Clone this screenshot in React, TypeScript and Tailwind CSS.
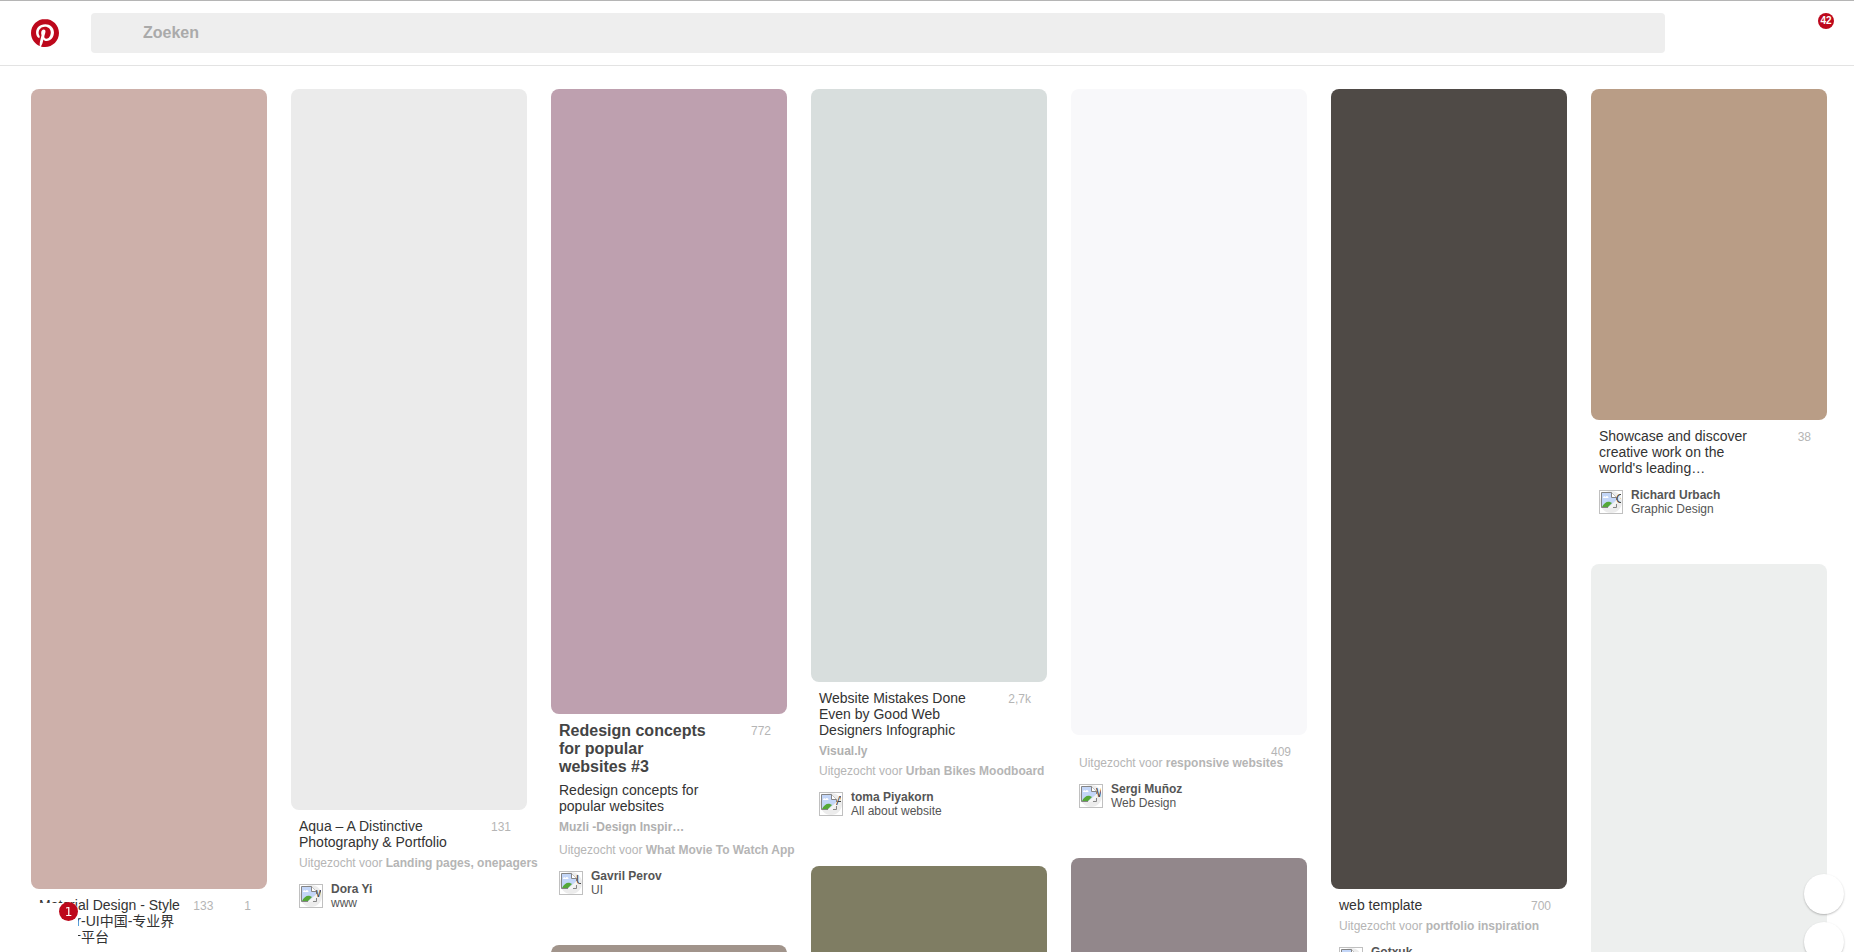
import React from 'react';

type Pin = {
  color: string;
  height: string;
  heading?: string;
  title?: string;
  count?: string;
  likes?: string;
  source?: string;
  sourceClass?: string;
  via?: string;
  author?: string;
  board?: string;
  glyph?: string;
};

const columns: Pin[][] = [
  [
    { color: 'bg-[#cdb0aa]', height: 'h-[800px]', title: 'Material Design - Style Guider-UI中国-专业界面设计平台', count: '133', likes: '1' },
  ],
  [
    { color: 'bg-[#ebebeb]', height: 'h-[721px]', title: 'Aqua – A Distinctive Photography & Portfolio', count: '131', via: 'Landing pages, onepagers', author: 'Dora Yi', board: 'www', glyph: 'w' },
  ],
  [
    { color: 'bg-[#bea0af]', height: 'h-[625px]', heading: 'Redesign concepts for popular websites #3', title: 'Redesign concepts for popular websites', count: '772', source: 'Muzli -Design Inspir…', sourceClass: 'pb-[3px]', via: 'What Movie To Watch App', author: 'Gavril Perov', board: 'UI', glyph: 'U' },
    { color: 'bg-[#a1948b]', height: 'h-[400px]' },
  ],
  [
    { color: 'bg-[#d8dedd]', height: 'h-[593px]', title: 'Website Mistakes Done Even by Good Web Designers Infographic', count: '2,7k', source: 'Visual.ly', via: 'Urban Bikes Moodboard', author: 'toma Piyakorn', board: 'All about website', glyph: 'A' },
    { color: 'bg-[#7f7d63]', height: 'h-[400px]' },
  ],
  [
    { color: 'bg-[#f8f8fa]', height: 'h-[646px]', count: '409', via: 'responsive websites', author: 'Sergi Muñoz', board: 'Web Design', glyph: 'W' },
    { color: 'bg-[#92878b]', height: 'h-[400px]' },
  ],
  [
    { color: 'bg-[#4f4a46]', height: 'h-[800px]', title: 'web template', count: '700', via: 'portfolio inspiration', author: 'Gotxuk', board: 'web', glyph: 'w' },
  ],
  [
    { color: 'bg-[#b99d86]', height: 'h-[331px]', title: "Showcase and discover creative work on the world's leading…", count: '38', author: 'Richard Urbach', board: 'Graphic Design', glyph: 'G' },
    { color: 'bg-[#edefee]', height: 'h-[600px]' },
  ],
];

function BrokenAvatar({ glyph }: { glyph: string }) {
  return (
    <svg className="size-6 shrink-0" viewBox="0 0 24 24" aria-hidden="true">
      <rect x=".5" y=".5" width="23" height="23" fill="#fff" stroke="#c0c0c0" />
      <circle cx="12" cy="12" r="11" fill="#ececec" />
      <path d="M2.500 2.500h10l5 5v2.500l-8.500 7.500h-6.500z" fill="#c3d6f8" />
      <path d="M4 8c0-2 2-2 2.500-1 1-2 3-1 3 1z" fill="#fff" />
      <path d="M3 17c2-4 5-6 8-5l2 1-4 4z" fill="#54a838" />
      <path d="M9 18 18 10v3l-5 5z" fill="#f4f4f4" />
      <path d="M9 17.500H2.500v-15h10l5 5V10M14 17.500h3.500V14" fill="none" stroke="#858585" />
      <path d="M12.500 2.500v5h5" fill="#fff" stroke="#858585" />
      <svg x="17" y="2" width="5" height="20" overflow="hidden">
        <text x="0" y="11" fontSize="12" fill="#444">{glyph}</text>
      </svg>
    </svg>
  );
}

function PinCard({ pin }: { pin: Pin }) {
  return (
    <article className="mb-12">
      <div className={`${pin.height} ${pin.color} rounded-lg`} />
      {pin.count && (
        <div className="px-2 pt-2">
          <div className={pin.title ? 'flex items-start justify-between' : 'flex h-[7px] items-start justify-end'}>
            {pin.title && (
              <div className="flex w-[148px] flex-col gap-[6px]">
                {pin.heading && <h3 className="text-[16px] leading-[18px] font-bold text-[#444]">{pin.heading}</h3>}
                <p className="text-[14px] leading-[16px] text-[#333]">{pin.title}</p>
              </div>
            )}
            <div className="flex gap-[31px] pt-[2px] pr-2 text-[12px] leading-[14px] text-[#b5b5b5]">
              <span>{pin.count}</span>
              {pin.likes && <span>{pin.likes}</span>}
            </div>
          </div>
          {pin.source && (
            <p className={`mt-[6px] text-[12px] leading-[14px] font-bold text-[#b0b0b0] ${pin.sourceClass ?? ''}`}>{pin.source}</p>
          )}
          {pin.via && (
            <p className="mt-[6px] text-[12px] leading-[14px] whitespace-nowrap text-[#b5b5b5]">
              Uitgezocht voor <a href="#board" className="font-bold">{pin.via}</a>
            </p>
          )}
          {pin.author && (
            <a href="#author" className="mt-[14px] flex gap-2 text-[12px] leading-[14px] text-[#555]">
              <BrokenAvatar glyph={pin.glyph ?? ''} />
              <span className="-mt-[2px]">
                <span className="block font-bold">{pin.author}</span>
                <span className="block">{pin.board}</span>
              </span>
            </a>
          )}
        </div>
      )}
    </article>
  );
}

export default function App() {
  return (
    <div className="h-screen overflow-hidden bg-white font-['Liberation_Sans','Noto_Sans_CJK_SC',sans-serif]">
      <header className="flex h-[66px] items-center border-t border-b border-t-[#b5b5b5] border-b-[#e3e3e3] pr-5 pl-[31px]">
        <a href="#home" aria-label="Pinterest" className="mr-8 shrink-0">
          <svg className="size-7" viewBox="0 0 24 24">
            <circle cx="12" cy="12" r="11" fill="#fff" />
            <path fill="#bd081c" d="M12 0C5.373 0 0 5.372 0 12c0 5.084 3.163 9.426 7.627 11.174-.105-.949-.2-2.405.042-3.441.218-.937 1.407-5.965 1.407-5.965s-.359-.719-.359-1.782c0-1.668.967-2.914 2.171-2.914 1.023 0 1.518.769 1.518 1.690 0 1.029-.655 2.568-.994 3.995-.283 1.194.599 2.169 1.777 2.169 2.133 0 3.772-2.249 3.772-5.495 0-2.873-2.064-4.882-5.012-4.882-3.414 0-5.418 2.561-5.418 5.207 0 1.031.397 2.138.893 2.738a.36.36 0 0 1 .083.345l-.333 1.360c-.053.220-.174.267-.402.161-1.499-.698-2.436-2.889-2.436-4.649 0-3.785 2.750-7.262 7.929-7.262 4.163 0 7.398 2.967 7.398 6.931 0 4.136-2.607 7.464-6.227 7.464-1.216 0-2.359-.631-2.750-1.378l-.748 2.853c-.271 1.043-1.002 2.350-1.492 3.146 1.124.347 2.317.535 3.554.535 6.627 0 12-5.373 12-12 0-6.628-5.373-12-12-12z" />
          </svg>
        </a>
        <input
          type="search"
          aria-label="Zoeken"
          placeholder="Zoeken"
          className="h-10 min-w-0 flex-1 rounded bg-[#eee] pl-[52px] text-[16px] font-bold text-[#555] outline-none placeholder:text-[#aaa]"
        />
        <button aria-label="42 meldingen" className="mb-6 ml-[153px] flex size-4 items-center justify-center rounded-full bg-[#bd081c] text-[10px] leading-4 font-bold text-white">
          42
        </button>
      </header>

      <main className="grid grid-cols-7 gap-6 pt-[23px] pr-[27px] pl-[31px]">
        {columns.map((pins, i) => (
          <section key={i} className="min-w-0">
            {pins.map((pin, j) => <PinCard key={j} pin={pin} />)}
          </section>
        ))}
      </main>

      <button aria-label="1 bericht" className="fixed bottom-0 left-[28px] h-[49px] w-[50px] rounded-t-lg bg-white">
        <span className="absolute -top-px right-0 flex size-[19px] items-center justify-center rounded-full bg-[#bd081c] font-['DejaVu_Sans',sans-serif] text-[12px] leading-4 text-white">1</span>
      </button>

      <div className="fixed right-[10px] -bottom-[10px] flex flex-col gap-2">
        <button aria-label="Toevoegen" className="size-10 rounded-full bg-white shadow-[0_1px_2px_rgba(0,0,0,0.25)]" />
        <button aria-label="Help" className="size-10 rounded-full bg-white shadow-[0_1px_2px_rgba(0,0,0,0.25)]" />
      </div>
    </div>
  );
}
